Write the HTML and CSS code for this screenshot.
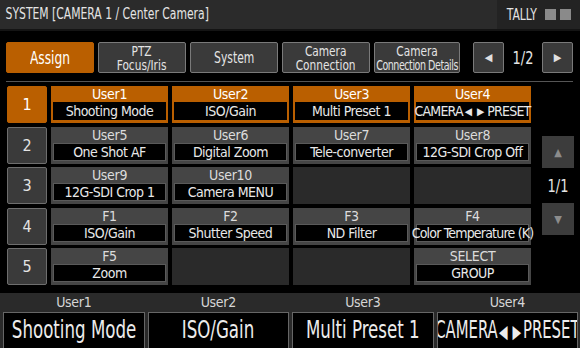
FILE: index.html
```html
<!DOCTYPE html>
<html lang="en">

<head>
    <meta charset="UTF-8">
    <meta name="viewport" content="width=device-width, initial-scale=1.0">
    <title>Assign</title>
    <link rel="stylesheet" href="styles.css">
</head>

<body>

    <div class="header">
        <span class="title narrow">SYSTEM [CAMERA 1 / Center Camera]</span>
        <div class="tally">
            <span class="narrow">TALLY</span>
            <i class="lamp"></i>
            <i class="lamp"></i>
        </div>
    </div>

    <div class="toolbar">
        <button class="tab active"><span class="narrow">Assign</span></button>
        <button class="tab two"><span class="narrow">PTZ<br>Focus/Iris</span></button>
        <button class="tab"><span class="narrow">System</span></button>
        <button class="tab two"><span class="narrow">Camera<br>Connection</span></button>
        <button class="tab two"><span class="narrow">Camera<br><span class="squeeze">Connection Details</span></span></button>
        <div class="pager">
            <button class="page-btn">&#9664;</button>
            <span class="page-num narrow">1/2</span>
            <button class="page-btn">&#9654;</button>
        </div>
    </div>
    <div class="rule"></div>

    <div class="main">
        <div class="grid">
            <button class="num active">1</button>
            <div class="cell active"><span class="label">User1</span><span class="value">Shooting Mode</span></div>
            <div class="cell active"><span class="label">User2</span><span class="value">ISO/Gain</span></div>
            <div class="cell active"><span class="label">User3</span><span class="value">Multi Preset 1</span></div>
            <div class="cell active"><span class="label">User4</span><span class="value long">CAMERA<small>&#9664; &#9654;</small>PRESET</span></div>

            <button class="num">2</button>
            <div class="cell"><span class="label">User5</span><span class="value">One Shot AF</span></div>
            <div class="cell"><span class="label">User6</span><span class="value">Digital Zoom</span></div>
            <div class="cell"><span class="label">User7</span><span class="value">Tele-converter</span></div>
            <div class="cell"><span class="label">User8</span><span class="value">12G-SDI Crop Off</span></div>

            <button class="num">3</button>
            <div class="cell"><span class="label">User9</span><span class="value">12G-SDI Crop 1</span></div>
            <div class="cell"><span class="label">User10</span><span class="value">Camera MENU</span></div>
            <div class="cell empty"></div>
            <div class="cell empty"></div>

            <button class="num">4</button>
            <div class="cell"><span class="label">F1</span><span class="value">ISO/Gain</span></div>
            <div class="cell"><span class="label">F2</span><span class="value">Shutter Speed</span></div>
            <div class="cell"><span class="label">F3</span><span class="value">ND Filter</span></div>
            <div class="cell"><span class="label">F4</span><span class="value long">Color Temperature (K)</span></div>

            <button class="num">5</button>
            <div class="cell"><span class="label">F5</span><span class="value">Zoom</span></div>
            <div class="cell empty"></div>
            <div class="cell empty"></div>
            <div class="cell"><span class="label">SELECT</span><span class="value">GROUP</span></div>
        </div>

        <div class="side">
            <button class="scroll">&#9650;</button>
            <span class="page-num narrow">1/1</span>
            <button class="scroll">&#9660;</button>
        </div>
    </div>

    <div class="footer">
        <div class="slot"><span class="slot-label">User1</span><span class="slot-value"><span class="narrow">Shooting Mode</span></span></div>
        <div class="slot"><span class="slot-label">User2</span><span class="slot-value"><span class="narrow">ISO/Gain</span></span></div>
        <div class="slot"><span class="slot-label">User3</span><span class="slot-value"><span class="narrow">Multi Preset 1</span></span></div>
        <div class="slot"><span class="slot-label">User4</span><span class="slot-value"><span class="narrow wide">CAMERA<small>&#9664; &#9654;</small>PRESET</span></span></div>
    </div>

</body>

</html>
```

FILE: styles.css
```css
body {
    margin: 0;
    width: 580px;
    height: 348px;
    overflow: hidden;
    background-color: #000;
    color: #e6e6e6;
    font-family: "DejaVu Sans Condensed", "DejaVu Sans", sans-serif;
}

button {
    font-family: inherit;
    padding: 0;
    cursor: pointer;
}

/* the panel font is narrower than any installed one */
.narrow {
    display: inline-block;
    white-space: nowrap;
    transform: scaleX(0.8);
}

/* top bar */
.header {
    height: 29px;
    display: flex;
    justify-content: space-between;
    background-color: #2b2b2b;
    border-bottom: 2px solid #141414;
}

.title {
    padding-left: 7px;
    font-size: 15px;
    line-height: 29px;
    color: #e4e4e4;
    transform-origin: left center;
}

.tally {
    width: 83px;
    display: flex;
    align-items: center;
    gap: 4px;
    padding-left: 6px;
    box-sizing: border-box;
    background-color: #232323;
    font-size: 15px;
    color: #e4e4e4;
}

.tally span {
    width: 38px;
}

.lamp {
    width: 11px;
    height: 11px;
    background-color: #8a8a8a;
}

/* tabs */
.toolbar {
    display: flex;
    align-items: center;
    gap: 4px;
    padding: 11px 7px 0 6px;
    height: 31px;
}

.tab {
    width: 88px;
    height: 31px;
    display: flex;
    align-items: center;
    justify-content: center;
    background-color: #3a3a3a;
    border: 1px solid #7a7a7a;
    border-radius: 2px;
    color: #e4e4e4;
    font-size: 15px;
    line-height: 14px;
    text-align: center;
    overflow: hidden;
}

.tab.two {
    font-size: 14px;
}

.tab.two .narrow {
    transform: scaleX(0.84);
}

.tab:nth-child(5) {
    width: 86px;
}

.squeeze {
    display: inline-block;
    letter-spacing: -0.6px;
    transform: scaleX(0.9);
}

.tab.active {
    background-color: #ba5f00;
    border-color: #ba5f00;
    color: #fff;
    font-size: 17px;
}

.pager {
    margin-left: auto;
    display: flex;
    align-items: center;
}

.page-btn {
    width: 31px;
    height: 31px;
    background-color: #3a3a3a;
    border: 1px solid #7a7a7a;
    border-radius: 2px;
    color: #e0e0e0;
    font-size: 11px;
}

.page-num {
    width: 38px;
    text-align: center;
    font-size: 18px;
    color: #e4e4e4;
}

.rule {
    margin: 8px 7px 0 6px;
    border-top: 1px solid #555;
}

/* assign grid */
.main {
    display: flex;
    align-items: center;
    margin-top: 4px;
    padding-left: 7px;
}

.grid {
    display: grid;
    grid-template-columns: 40px repeat(4, 117px);
    grid-auto-rows: 37px;
    column-gap: 4px;
    row-gap: 3.5px;
}

.num {
    background-color: #3a3a3a;
    border: 1px solid #6e6e6e;
    border-radius: 2px;
    color: #e4e4e4;
    font-size: 16px;
}

.num.active {
    background-color: #ba5f00;
    border-color: #ba5f00;
    color: #fff;
}

.cell {
    display: flex;
    flex-direction: column;
    padding: 0 2px 3px;
    background-color: #454545;
    box-sizing: border-box;
}

.cell.empty {
    background-color: #2a2a2a;
}

.cell.active {
    background-color: #ba5f00;
}

.label {
    height: 16px;
    line-height: 17px;
    text-align: center;
    font-size: 14px;
    letter-spacing: -0.3px;
    color: #dcdcdc;
}

.cell.active .label {
    color: #fff;
}

.value {
    flex: 1;
    display: flex;
    justify-content: center;
    align-items: center;
    background-color: #000;
    border: 1px solid #5a5a5a;
    font-size: 14px;
    letter-spacing: -0.5px;
    color: #e8e8e8;
    white-space: nowrap;
}

.value.long {
    letter-spacing: -0.8px;
}

.cell.active .value {
    border-color: #000;
}

.value small,
.slot-value small {
    font-size: 0.75em;
    margin: 0 2px;
    letter-spacing: 1px;
}

.side {
    margin-left: 11px;
    width: 32px;
    display: flex;
    flex-direction: column;
    align-items: center;
}

.side .page-num {
    width: auto;
    height: 35px;
    line-height: 35px;
}

.scroll {
    width: 32px;
    height: 32px;
    border: none;
    background-color: #3c3c3c;
    color: #8c8c8c;
    font-size: 11px;
}

/* bottom bar */
.footer {
    margin-top: 8px;
    height: 60px;
    display: grid;
    grid-template-columns: repeat(4, minmax(0, 1fr));
    column-gap: 3px;
    padding: 0 2px 0 3px;
    background-color: #2a2a2a;
}

.slot {
    display: flex;
    flex-direction: column;
    min-width: 0;
}

.slot-label {
    height: 19px;
    line-height: 19px;
    text-align: center;
    font-size: 14px;
    letter-spacing: -0.3px;
    color: #d6d6d6;
}

.slot-value {
    height: 40px;
    display: flex;
    justify-content: center;
    background-color: #000;
    border: 1px solid #666;
    font-size: 25px;
    line-height: 34px;
    color: #ececec;
    white-space: nowrap;
    overflow: hidden;
}

.slot-value .narrow {
    transform: scaleX(0.74);
}

.slot-value .wide {
    transform: scaleX(0.66);
}
```
